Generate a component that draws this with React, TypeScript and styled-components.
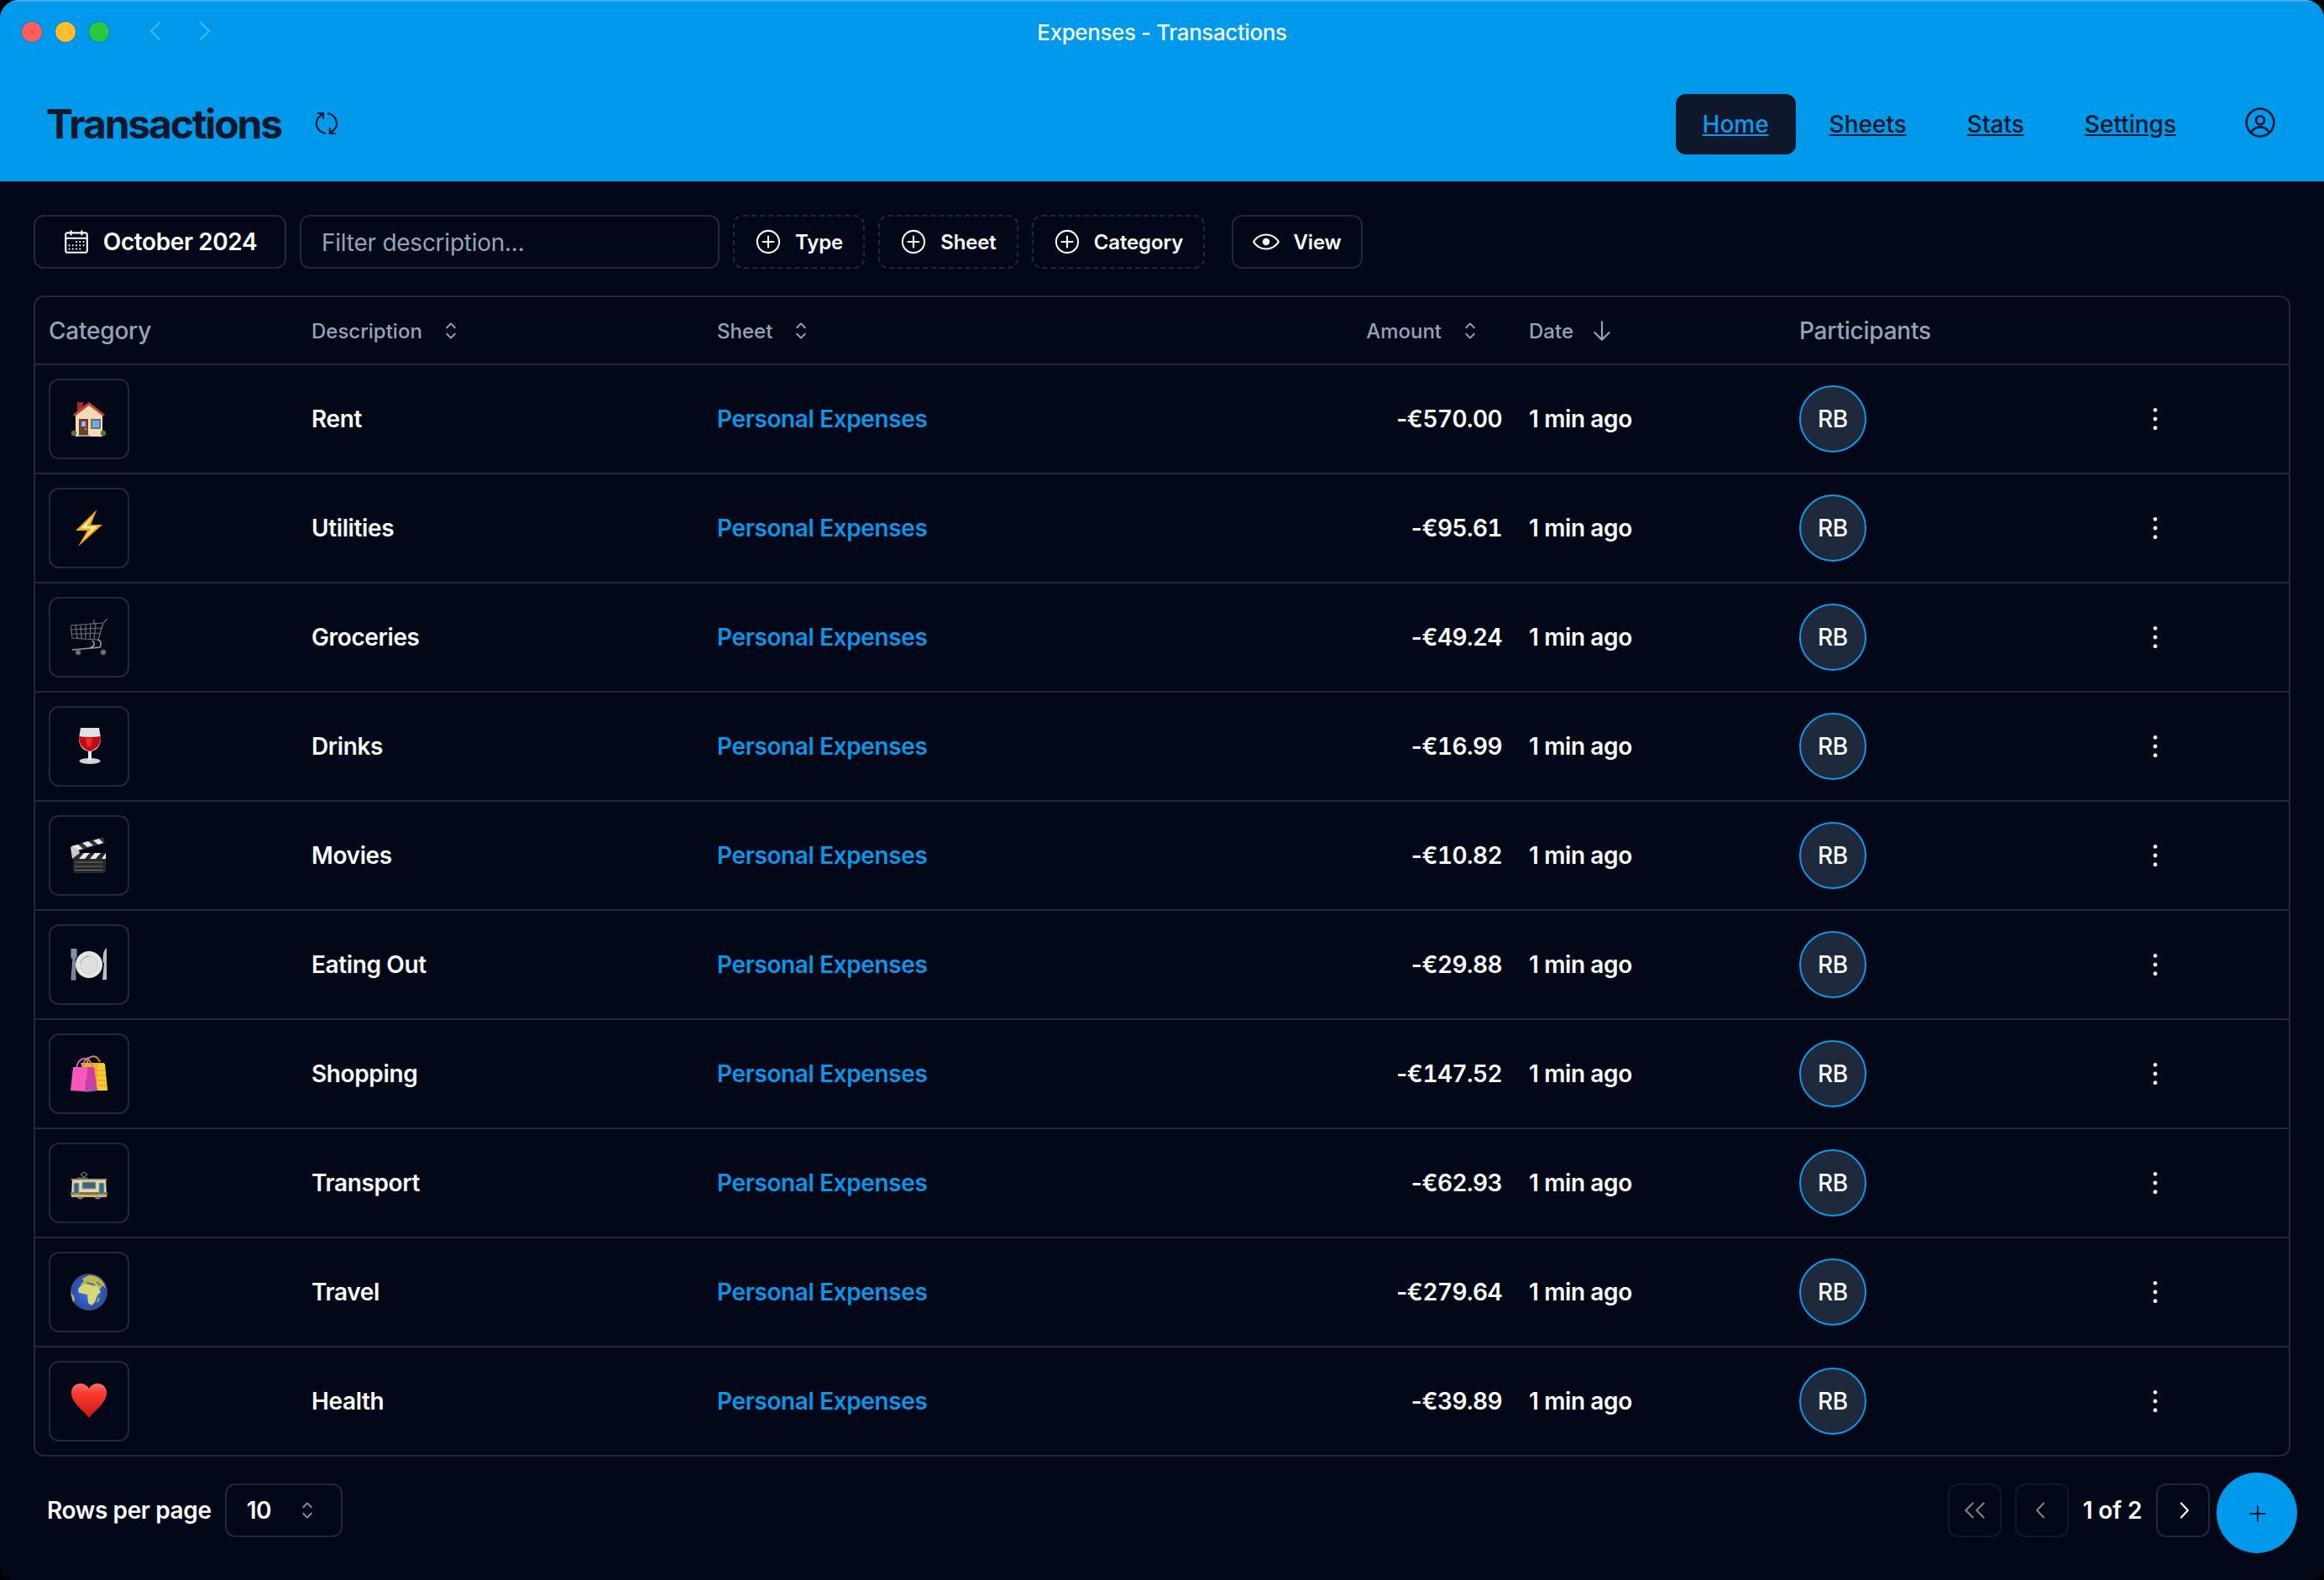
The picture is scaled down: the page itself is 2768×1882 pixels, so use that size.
import React from "react";
import styled, { createGlobalStyle } from "styled-components";
import { RxUpdate, RxAvatar, RxCalendar, RxPlusCircled, RxEyeOpen, RxCaretSort, RxArrowDown, RxDotsVertical, RxDoubleArrowLeft, RxChevronLeft, RxChevronRight, RxPlus } from "react-icons/rx";

const line = "#1e293b";
const Global = createGlobalStyle`
  *{box-sizing:border-box}
  body{margin:0;background:#000;font-family:Inter,"Liberation Sans",sans-serif;color:#f8fafc}
`;
const Window = styled.div`width:2768px;height:1882px;background:#020817;border-radius:22px 22px 16px 16px;overflow:hidden;display:flex;flex-direction:column;position:relative;`;
const Top = styled.header`background:#0099eb;height:216px;box-shadow:inset 0 2px 0 #45a9f0;flex:none;display:flex;flex-direction:column;`;
const TitleBar = styled.div`flex:none;height:76px;display:grid;grid-template-columns:1fr auto 1fr;align-items:center;padding-left:26px;padding-right:26px;font-size:26px;font-weight:500;letter-spacing:-.41px;color:#f2f9ff;`;
const Controls = styled.div`display:flex;align-items:center;`;
const Light = styled.i<{ $c: string }>`width:24px;height:24px;border-radius:50%;background:${p => p.$c};margin-right:16px;box-shadow:0 0 0 1px #0002;`;
const Arrow = styled.svg<{ $gap: number }>`width:14px;height:24px;fill:none;stroke:#45b4f5;stroke-width:2.4;stroke-linecap:round;margin-left:${p => p.$gap}px;margin-bottom:2px;`;
const Head = styled.div`flex:none;display:flex;align-items:center;height:144px;padding:0 56px;color:#0f172a;`;
const Title = styled.h1`margin:0 0 2px -1px;font-size:48px;font-weight:700;letter-spacing:-2.15px;`;
const Refresh = styled(RxUpdate)`width:30px;height:30px;margin:0 0 2px 39px;`;
const Nav = styled.nav`display:flex;margin-left:auto;align-items:center;`;
const NavLink = styled.a<{ $on?: boolean }>`height:72px;padding:0 32px;display:flex;align-items:center;border-radius:12px;font-size:28px;font-weight:500;text-decoration:underline;margin-right:8px;color:${p => p.$on ? "#0c99eb" : "#0f172a"};background:${p => p.$on ? "#0f172a" : "none"};`;
const User = styled(RxAvatar)`width:40px;height:40px;margin:0 0 4px 40px;`;
const Main = styled.main`padding:40px;display:flex;flex-direction:column;`;
const Toolbar = styled.div`display:flex;gap:16px;height:64px;margin-bottom:32px;`;
const Button = styled.button<{ $w: number; $dash?: boolean }>`width:${p => p.$w}px;height:64px;padding:0;border:2px ${p => p.$dash ? "dashed" : "solid"} ${line};border-radius:12px;background:none;color:#f8fafc;font:560 24px Inter,sans-serif;letter-spacing:-.15px;display:flex;align-items:center;justify-content:center;gap:16px;svg{width:32px;height:32px;}`;
const Month = styled(Button)`font-size:28px;font-weight:580;letter-spacing:-.4px;`;
const View = styled(Button)`margin-left:16px;`;
const Input = styled.input`width:500px;height:64px;border:2px solid ${line};border-radius:12px;background:none;padding:2px 24px 0;font:400 28px Inter,sans-serif;letter-spacing:-.25px;color:#94a3b8;&::placeholder{color:#94a3b8;opacity:1}`;
const Table = styled.section`border:2px solid ${line};border-radius:12px;`;
const Row = styled.div`display:grid;grid-template-columns:313px 483px 675px 292px 322px 408px 1fr;height:130px;align-items:center;font-size:28px;font-weight:560;letter-spacing:-.38px;border-bottom:2px solid ${line};&:last-child{border-bottom:0;height:128px;}`;
const HeadRow = styled(Row)`height:81px;padding-top:1px;color:#94a3b8;font-weight:540;letter-spacing:-.22px;`;
const Cell = styled.div<{ $end?: boolean }>`padding:0 16px;display:flex;align-items:center;justify-content:${p => p.$end ? "flex-end" : "flex-start"};`;
const Digits = styled.span`font-variant-numeric:tabular-nums;letter-spacing:-.6px;`;
const Sort = styled.span<{ $inset?: boolean }>`display:flex;align-items:center;gap:18px;font-size:24px;letter-spacing:0;margin-right:${p => p.$inset ? 22 : 0}px;svg{width:32px;height:32px;}`;
const Tile = styled.div`width:96px;height:96px;border:2px solid ${line};border-radius:12px;display:grid;place-items:center;svg{width:44px;height:44px;}`;
const Link = styled.a`color:#0a95e6;`;
const Avatar = styled.div`width:80px;height:80px;border-radius:50%;border:2px solid #0c99eb;background:${line};display:grid;place-items:center;font-size:28px;font-weight:500;`;
const Dots = styled(RxDotsVertical)`width:32px;height:32px;`;
const Footer = styled.footer`display:flex;align-items:center;height:64px;margin-top:32px;padding-left:16px;font-size:28px;font-weight:560;letter-spacing:-.38px;`;
const Select = styled.div`width:140px;height:64px;border:2px solid ${line};border-radius:12px;display:flex;align-items:center;padding:0 24px;justify-content:space-between;margin-left:16px;svg{width:32px;height:32px;opacity:.55;}`;
const Pager = styled.div`display:flex;align-items:center;gap:16px;margin-left:auto;padding-right:96px;`;
const PageCount = styled.span`width:72px;text-align:center;white-space:nowrap;letter-spacing:-.1px;`;
const PageButton = styled.button<{ $off?: boolean }>`width:64px;height:64px;padding:0;border:2px solid ${line};border-radius:12px;background:none;color:#f8fafc;opacity:${p => p.$off ? .5 : 1};display:grid;place-items:center;svg{width:32px;height:32px;}`;
const Fab = styled.button`position:absolute;left:2640px;top:1754px;width:96px;height:96px;border:0;border-radius:50%;background:#0099eb;color:#0f172a;display:grid;place-items:center;padding:2px 0 0 2px;svg{width:28px;height:28px;}`;

const House = () => <svg viewBox="0 0 44 44">
  <path d="M8 2h7v14H8z" fill="#a52c2b" /><path d="M6 18 22 5l16 13v25H6z" fill="#f0dcb8" />
  <path d="M3 17 22 2l19 15-2 2L22 6 5 19z" fill="#c8423c" />
  <path d="M10 22h11v20H10z" fill="#6f3e32" /><path d="M13 25h5v6h-5z" fill="#8ac0ec" /><path d="M24 22h12v12H24z" fill="#7a6c67" /><path d="M26 24h8v8h-8z" fill="#62b0e8" />
  <circle cx="18" cy="34" r="1" fill="#f3bf57" /><circle cx="4" cy="39" r="3.2" fill="#4e7a35" /><circle cx="39" cy="39" r="3.2" fill="#4e7a35" /><path d="M9 41h14v2H9z" fill="#a09a94" /></svg>;
const Bolt = () => <svg viewBox="0 0 44 44"><path d="M31.500 0 6 25h14L9 44 38 18H24z" fill="#f5a51c" /><path d="M27 7 12 22.500h13L15 36l17-16H19z" fill="#fff0a0" /></svg>;
const Cart = () => <svg viewBox="0 0 44 44" fill="none" stroke="#6d727b" strokeWidth="1.200">
  <path d="M44 0 39 5 33 25 2 23 0 8l38-3M0 13l37-2M1 18l34-1M6 8l2 15M12 8l1 15M18 7v17M24 7l-1 17M30 6l-2 18M28 1v6" />
  <path d="M33 25c5 3 3 6 2 9L2 37M26 26c4 4 2 7-2 8" stroke="#989ca5" strokeWidth="1.600" /><circle cx="9" cy="40" r="2.800" fill="#777" stroke="#555" /><circle cx="39" cy="40" r="2.800" fill="#777" stroke="#555" /></svg>;
const Wine = () => <svg viewBox="0 0 44 44"><path d="M12 0h22l2 12c0 9-4 14-11 16v9h-4v-9C14 26 10 21 10 12z" fill="#dfe3e5" /><path d="M10 10q13 2 26 0c0 10-4 15-13 18-9-3-13-8-13-18z" fill="#c30d12" /><path d="M18 12h8l-2 10h-4z" fill="#ef2c2a" /><ellipse cx="23" cy="39.500" rx="12.500" ry="3.500" fill="#cfd3d6" /><path d="M21 28h4v11h-4z" fill="#e7eaec" /></svg>;
const Clapper = () => <svg viewBox="0 0 44 44"><path d="M0 11 39 0l2 7L2 19z" fill="#343434" /><path d="m1 11 8-2 6 5-8 2zM14 7l7-2 6 5-7 2zM27 4l7-2 5 5-6 2z" fill="#e8e8e8" /><path d="M3 19h39v20q0 4-4 4H7q-4 0-4-4z" fill="#2a2929" /><path d="M0 12q9-1 11 7l-9 7z" fill="#c9c9c9" /><path d="M10 26l6-7h7l-6 7zM23 26l6-7h7l-6 7zM37 26l5-7v7z" fill="#e8e8e8" /><path d="M5 30h33M5 35h33M5 39.500h33" stroke="#777" /></svg>;
const Plate = () => <svg viewBox="0 0 44 44"><circle cx="22" cy="22" r="16" fill="#e5e5e3" /><circle cx="22" cy="22" r="10.500" fill="#dededc" stroke="#cacac8" /><path d="M12 21a10 10 0 0 1 10-9" fill="none" stroke="#aaa" /><path d="M1 3v9q0 3 2 3L1 40h5L5 15q2 0 2-3V3M3 3v9M5 3v9" fill="#74849a" stroke="#8f9db0" /><path d="M43 2c-4 3-5 10-4 18h1l-2 20h5z" fill="#b4c1d1" /></svg>;
const Bags = () => <svg viewBox="0 0 44 44"><path d="M12 9h28l4 33H24z" fill="#edb51c" /><path d="M33 10h8l3 32H30z" fill="#f6ca34" /><path d="M20 9c0-9 11-11 15-1" fill="none" stroke="#cf941d" strokeWidth="2" /><path d="M3 14h17l-2 29-18-1z" fill="#f958bb" /><path d="M20 14h8l4 28-14 2z" fill="#cf3ca7" /><path d="m18 43 7-9 7 8z" fill="#9857b8" /><path d="M7 16c1-15 17-17 19-1M15 14c1-8 4-11 7-11" fill="none" stroke="#d578bb" strokeWidth="1.800" /><path d="M29 18h12M30 24h12M31 30h12M33 36h10" stroke="#dda01c" /></svg>;
const Tram = () => <svg viewBox="0 0 44 44"><path d="m16 9-4 3 4 3 4-3zM8 16h12" fill="none" stroke="#8c9690" /><path d="M2 17h40l1 21H1z" fill="#e9d9b2" /><path d="M1 17h42v2H1z" fill="#a79769" /><path d="M0 33h44v4H0z" fill="#78734a" /><path d="M4 22h6v13H4zM14 21h16v8H14zM34 22h6v13h-6z" fill="#386980" stroke="#9aa498" /><path d="M1 36h42v3H1z" fill="#d1ad72" /><path d="M8 39q3.500 4 7 0M29 39q3.500 4 7 0" fill="#555" stroke="#aaa" /></svg>;
const Globe = () => <svg viewBox="0 0 44 44"><defs><radialGradient id="sea"><stop stopColor="#3c7ce0" /><stop offset=".75" stopColor="#2855c4" /><stop offset="1" stopColor="#3c4b83" /></radialGradient></defs><circle cx="22" cy="22" r="22" fill="url(#sea)" /><path d="m13 12 3-3-2-3 8-4c10-1 18 7 20 16l-4-4-3 5-4-3-5-1-4 1-3-3-3 2-4-1z" fill="#bcba4d" /><path d="M14 14q5-3 9 0l9 1 4 7-4 4-3 8-4 4-4-3-1-10-10-2q-3-6 4-9z" fill="#d7d775" /><path d="m31 34 2-5 2-1-2 6zM0 22l4 5 1 5-2 2z" fill="#b6b458" /><path d="m19 11 5 1 5 2M31 10l5 4" stroke="#2b60b8" strokeWidth="1.500" /></svg>;
const Heart = () => <svg viewBox="0 0 44 44"><defs><linearGradient id="heart" x2="0" y2="1"><stop stopColor="#ff7068" /><stop offset=".3" stopColor="#fa392e" /><stop offset="1" stopColor="#ca1614" /></linearGradient></defs><path d="M22 42C17 34 1 25 1 12 1 0 16-3 22 7 28-3 43 0 43 12 43 25 27 34 22 42z" fill="url(#heart)" /></svg>;

const rows: [React.FC, string, string][] = [
  [House, "Rent", "570.00"], [Bolt, "Utilities", "95.61"], [Cart, "Groceries", "49.24"], [Wine, "Drinks", "16.99"], [Clapper, "Movies", "10.82"],
  [Plate, "Eating Out", "29.88"], [Bags, "Shopping", "147.52"], [Tram, "Transport", "62.93"], [Globe, "Travel", "279.64"], [Heart, "Health", "39.89"],
];

export default function App() {
  return <><Global /><Window>
    <Top>
      <TitleBar>
        <Controls><Light $c="#ff5f57" /><Light $c="#febc2e" /><Light $c="#28c840" />
          <Arrow $gap={32} viewBox="0 0 14 24"><path d="M12 2 2 12l10 10" /></Arrow><Arrow $gap={45} viewBox="0 0 14 24"><path d="m2 2 10 10L2 22" /></Arrow></Controls>
        <span>Expenses - Transactions</span><span />
      </TitleBar>
      <Head><Title>Transactions</Title><Refresh />
        <Nav><NavLink $on>Home</NavLink><NavLink>Sheets</NavLink><NavLink>Stats</NavLink><NavLink>Settings</NavLink><User /></Nav></Head>
    </Top>
    <Main>
      <Toolbar>
        <Month $w={301}><RxCalendar />October 2024</Month><Input placeholder="Filter description..." />
        <Button $w={157} $dash><RxPlusCircled />Type</Button><Button $w={167} $dash><RxPlusCircled />Sheet</Button><Button $w={206} $dash><RxPlusCircled />Category</Button>
        <View $w={156}><RxEyeOpen />View</View>
      </Toolbar>
      <Table>
        <HeadRow><Cell>Category</Cell><Cell><Sort>Description<RxCaretSort /></Sort></Cell><Cell><Sort>Sheet<RxCaretSort /></Sort></Cell><Cell $end><Sort $inset>Amount<RxCaretSort /></Sort></Cell><Cell><Sort>Date<RxArrowDown /></Sort></Cell><Cell>Participants</Cell><Cell /></HeadRow>
        {rows.map(([Icon, name, amount]) => <Row key={name}><Cell><Tile><Icon /></Tile></Cell><Cell>{name}</Cell><Cell><Link>Personal Expenses</Link></Cell><Cell $end>-€<Digits>{amount}</Digits></Cell><Cell>1 min ago</Cell><Cell><Avatar>RB</Avatar></Cell><Cell><Dots /></Cell></Row>)}
      </Table>
      <Footer>Rows per page<Select>10<RxCaretSort /></Select>
        <Pager><PageButton $off><RxDoubleArrowLeft /></PageButton><PageButton $off><RxChevronLeft /></PageButton><PageCount>1 of 2</PageCount><PageButton><RxChevronRight /></PageButton></Pager></Footer>
    </Main>
    <Fab><RxPlus /></Fab>
  </Window></>;
}
